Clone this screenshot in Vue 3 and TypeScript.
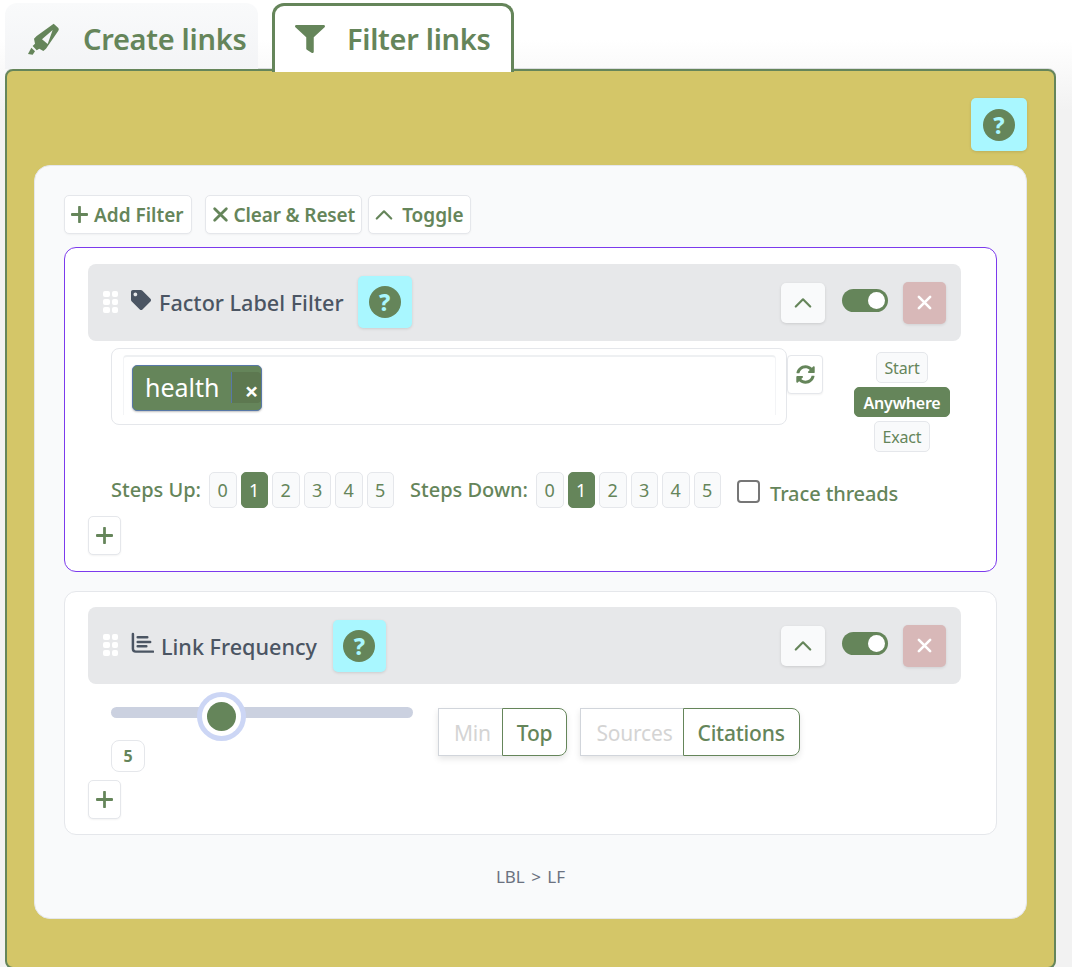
<template>
  <div class="page">
    <nav class="tabs">
      <button class="tab">
        <svg class="tab-icon marker" viewBox="20 20 105 105">
          <path fill-rule="evenodd" d="M103 25 117 38q3 4 0 8L80 100l-8 7-12-7-8 5-12-13 7-7-3-15 8-8ZM100 44 68 72l17 14Z" />
          <path d="M36 97 47 108l-7 10-14-2Z" />
        </svg>
        Create links
      </button>
      <button class="tab active">
        <svg class="tab-icon funnel" viewBox="0 0 512 512" preserveAspectRatio="none"><path :d="icons.filter" /></svg>
        Filter links
      </button>
    </nav>

    <section class="panel">
      <div class="panel-top">
        <button class="help big"><span class="help-dot">?</span></button>
      </div>

      <div class="builder">
        <div class="toolbar">
          <button class="tool add-filter">
            <svg class="sign" viewBox="0 0 16 16"><path d="M8 1v14M1 8h14" /></svg>
            Add Filter
          </button>
          <button class="tool clear">
            <svg class="sign" viewBox="0 0 16 16"><path d="M2.5 2.5l11 11M13.5 2.5l-11 11" /></svg>
            Clear &amp; Reset
          </button>
          <button class="tool toggle">
            <svg class="chev small" viewBox="0 0 20 12"><path d="M2 10.5 10 2.5l8 8" /></svg>
            Toggle
          </button>
        </div>

        <article class="filter selected">
          <header class="filter-head">
            <span class="grip"><i v-for="n in 6" :key="n"></i></span>
            <svg class="head-icon tag" viewBox="0 0 512 512"><path :d="icons.tag" /></svg>
            <h3>Factor Label Filter</h3>
            <button class="help"><span class="help-dot">?</span></button>
            <div class="head-actions">
              <button class="collapse">
                <svg class="chev" viewBox="0 0 20 12"><path d="M2 10.5 10 2.5l8 8" /></svg>
              </button>
              <span class="switch"><i></i></span>
              <button class="remove">
                <svg viewBox="0 0 16 16"><path d="M2 2l12 12M14 2 2 14" /></svg>
              </button>
            </div>
          </header>

          <div class="search-row">
            <div class="search">
              <div class="search-inner">
                <span class="chip">
                  <span class="chip-text">health</span>
                  <span class="chip-x">×</span>
                </span>
              </div>
            </div>
            <button class="refresh">
              <svg viewBox="0 0 512 512"><path :d="icons.sync" /></svg>
            </button>
            <div class="match">
              <button class="match-btn">Start</button>
              <button class="match-btn on">Anywhere</button>
              <button class="match-btn">Exact</button>
            </div>
          </div>

          <div class="steps">
            <span class="steps-label">Steps Up:</span>
            <div class="step-group">
              <button v-for="n in stepValues" :key="n" class="step" :class="{ on: n === 1 }">{{ n }}</button>
            </div>
            <span class="steps-label down">Steps Down:</span>
            <div class="step-group">
              <button v-for="n in stepValues" :key="n" class="step" :class="{ on: n === 1 }">{{ n }}</button>
            </div>
            <label class="trace"><span class="check"></span>Trace threads</label>
          </div>

          <button class="add">
            <svg class="sign" viewBox="0 0 16 16"><path d="M8 1v14M1 8h14" /></svg>
          </button>
        </article>

        <article class="filter second">
          <header class="filter-head">
            <span class="grip"><i v-for="n in 6" :key="n"></i></span>
            <svg class="head-icon chart" viewBox="0 0 24 22">
              <path d="M2 1.5V17a3 3 0 0 0 3 3h18" />
              <path d="M7 5h10M7 10h13M7 14.5h9" />
            </svg>
            <h3>Link Frequency</h3>
            <button class="help"><span class="help-dot">?</span></button>
            <div class="head-actions">
              <button class="collapse">
                <svg class="chev" viewBox="0 0 20 12"><path d="M2 10.5 10 2.5l8 8" /></svg>
              </button>
              <span class="switch"><i></i></span>
              <button class="remove">
                <svg viewBox="0 0 16 16"><path d="M2 2l12 12M14 2 2 14" /></svg>
              </button>
            </div>
          </header>

          <div class="freq-row">
            <div class="slider-wrap">
              <div class="slider">
                <span class="thumb"></span>
              </div>
              <span class="slider-value">5</span>
            </div>
            <div class="seg">
              <button class="seg-btn">Min</button>
              <button class="seg-btn on">Top</button>
            </div>
            <div class="seg">
              <button class="seg-btn">Sources</button>
              <button class="seg-btn on">Citations</button>
            </div>
          </div>

          <button class="add">
            <svg class="sign" viewBox="0 0 16 16"><path d="M8 1v14M1 8h14" /></svg>
          </button>
        </article>

        <p class="summary">LBL &gt; LF</p>
      </div>
    </section>
  </div>
</template>

<script setup lang="ts">
const stepValues = [0, 1, 2, 3, 4, 5]

// Font Awesome solid glyphs
const icons = {
  filter:
    'M487.976 0H24.028C2.71 0-8.047 25.866 7.058 40.971L192 225.941V432c0 7.831 3.821 15.17 10.237 19.662l80 55.98C298.02 518.69 320 507.493 320 487.98V225.941l184.947-184.97C520.021 25.896 509.338 0 487.976 0z',
  tag:
    'M0 252.118V48C0 21.49 21.49 0 48 0h204.118a48 48 0 0 1 33.941 14.059l211.882 211.882c18.745 18.745 18.745 49.137 0 67.882L293.823 497.941c-18.745 18.745-49.137 18.745-67.882 0L14.059 286.059A48 48 0 0 1 0 252.118zM112 64c-26.51 0-48 21.49-48 48s21.49 48 48 48 48-21.49 48-48-21.49-48-48-48z',
  sync:
    'M370.72 133.28C339.458 104.008 298.888 87.962 255.848 88c-77.458.068-144.328 53.178-162.791 126.85-1.344 5.363-6.122 9.15-11.651 9.15H24.103c-7.498 0-13.194-6.807-11.807-14.176C33.933 94.924 134.813 8 256 8c66.448 0 126.791 26.136 171.315 68.685L463.03 40.97C478.149 25.851 504 36.559 504 57.941V192c0 13.255-10.745 24-24 24H345.941c-21.382 0-32.09-25.851-16.971-40.971l41.75-41.749zM32 296h134.059c21.382 0 32.09 25.851 16.971 40.971l-41.75 41.75c31.262 29.273 71.835 45.319 114.876 45.28 77.418-.07 144.315-53.144 162.787-126.849 1.344-5.363 6.122-9.15 11.651-9.15h57.304c7.498 0 13.194 6.807 11.807 14.176C478.067 417.076 377.187 504 256 504c-66.448 0-126.791-26.136-171.315-68.685L48.97 471.03C33.851 486.149 8 475.441 8 454.059V320c0-13.255 10.745-24 24-24z',
}
</script>

<style scoped>
.page {
  height: 967px;
  overflow: hidden;
  box-sizing: border-box;
  padding: 3px 16px 0 5px;
  font-family: "Noto Sans", "Open Sans", sans-serif;
  color: #65855a;
  background: linear-gradient(#fff 40px, #f2f2f2 110px);
}

button {
  font-family: inherit;
  color: inherit;
  padding: 0;
  cursor: pointer;
}

.tabs {
  display: flex;
  gap: 14px;
  height: 69px;
  position: relative;
  z-index: 1;
}

.tab {
  width: 253px;
  height: 66px;
  box-sizing: border-box;
  display: flex;
  align-items: center;
  gap: 23px;
  padding: 5px 0 0 23px;
  border: 0;
  border-radius: 12px 12px 0 0;
  background: linear-gradient(#f9fafb, #f3f4f6);
  font-size: 29px;
  font-weight: 600;
  letter-spacing: -0.3px;
}

.tab.active {
  width: 242px;
  height: 69px;
  padding: 0 0 2px 20px;
  gap: 22px;
  border: 3px solid #65855a;
  border-bottom: 0;
  background: #fff;
}

.tab-icon {
  fill: #65855a;
  flex: none;
}

.tab-icon.marker {
  width: 35px;
  height: 35px;
  margin: 2px -1px 0 -2px;
}

.tab-icon.funnel {
  width: 30px;
  height: 28px;
  margin-top: 2px;
}

.panel {
  box-sizing: border-box;
  height: 900px;
  margin-top: -3px;
  border: 2px solid #65855a;
  border-radius: 8px;
  background: #d4c668;
  box-shadow: 0 -1px 0 #d9dcdf;
  padding: 27px 27px 0;
}

.panel-top {
  display: flex;
  justify-content: flex-end;
  height: 67px;
}

.help {
  width: 54px;
  height: 52px;
  border: 0;
  border-radius: 5px;
  background: #a9f7ff;
  box-shadow: 0 1px 3px rgba(0, 0, 0, 0.12);
  display: flex;
  align-items: center;
  justify-content: center;
}

.selected .help {
  margin-top: -1px;
}

.second .help {
  width: 53px;
}

.help.big {
  width: 56px;
  height: 53px;
}

.help-dot {
  width: 32px;
  height: 32px;
  border-radius: 50%;
  background: #65855a;
  color: #a9f7ff;
  font-size: 23px;
  font-weight: 800;
  line-height: 32px;
  text-align: center;
}

.builder {
  box-sizing: border-box;
  height: 754px;
  padding: 29px 29px 0;
  background: #f9fafb;
  border: 1px solid #e5e7eb;
  border-radius: 16px;
}

.toolbar {
  display: flex;
  height: 52px;
  align-items: flex-start;
}

.tool {
  height: 39px;
  box-sizing: border-box;
  padding: 0 6px;
  margin-right: 6px;
  background: #fff;
  border: 1px solid #e5e7eb;
  border-radius: 5px;
  font-size: 19px;
  font-weight: 600;
  display: flex;
  align-items: center;
  gap: 6px;
  white-space: nowrap;
  box-shadow: 0 1px 2px rgba(0, 0, 0, 0.04);
}

.tool.add-filter {
  margin-right: 13px;
  padding-right: 7px;
}

.tool.clear {
  gap: 5px;
  letter-spacing: -0.15px;
}

.tool.toggle {
  gap: 9px;
}

.sign {
  width: 17px;
  height: 17px;
  fill: none;
  stroke: #65855a;
  stroke-width: 2.6;
  stroke-linecap: round;
  flex: none;
}

.chev {
  width: 18px;
  height: 11px;
  fill: none;
  stroke: #65855a;
  stroke-width: 2.4;
  stroke-linecap: round;
  stroke-linejoin: round;
}

.filter {
  box-sizing: border-box;
  background: #fff;
  border: 1px solid #e5e7eb;
  border-radius: 12px;
  padding: 16px 35px 0 23px;
}

.filter.selected {
  height: 325px;
  border-color: #7c3aed;
}

.filter.second {
  height: 244px;
  margin-top: 19px;
  padding-top: 15px;
}

.filter-head {
  height: 77px;
  display: flex;
  align-items: center;
  padding: 0 15px;
  background: #e7e8ea;
  border-radius: 8px;
  color: #4b5563;
}

.grip {
  width: 15px;
  display: grid;
  grid-template-columns: 6.5px 6.5px;
  gap: 2px;
  margin: -2px 13px 0 0;
}

.grip i {
  height: 6px;
  border-radius: 2px;
  background: #fff;
}

.head-icon {
  flex: none;
  margin-top: -5px;
}

.head-icon.tag {
  width: 20px;
  height: 20px;
  fill: #4b5563;
  margin-right: 8px;
}

.head-icon.chart {
  width: 23px;
  height: 22px;
  fill: none;
  stroke: #4b5563;
  stroke-width: 2.6;
  stroke-linecap: round;
  margin-right: 7px;
}

h3 {
  margin: 0 14px 0 0;
  font-size: 21.6px;
  font-weight: 500;
  white-space: nowrap;
}

.second h3 {
  margin: 2px 16px 0 0;
}

.head-actions {
  margin-left: auto;
  display: flex;
  align-items: center;
}

.collapse {
  width: 44px;
  height: 40px;
  background: #f9fafb;
  border: 0;
  border-radius: 5px;
  box-shadow: 0 1px 3px rgba(0, 0, 0, 0.12);
  display: flex;
  align-items: center;
  justify-content: center;
}

.switch {
  width: 46px;
  height: 23px;
  margin: -4px 15px 0 17px;
  border-radius: 12px;
  background: #65855a;
  position: relative;
}

.switch i {
  position: absolute;
  right: 3px;
  top: 3px;
  width: 17px;
  height: 17px;
  border-radius: 50%;
  background: #fff;
}

.remove {
  width: 43px;
  height: 42px;
  background: #d8b8b8;
  border: 0;
  border-radius: 5px;
  box-shadow: 0 1px 3px rgba(0, 0, 0, 0.1);
  display: flex;
  align-items: center;
  justify-content: center;
}

.remove svg {
  width: 15px;
  height: 15px;
  fill: none;
  stroke: #fff;
  stroke-width: 2.8;
  stroke-linecap: round;
}

.search-row {
  display: flex;
  align-items: flex-start;
  margin: 7px 0 0 23px;
  height: 124px;
}

.search {
  width: 676px;
  height: 77px;
  box-sizing: border-box;
  flex: none;
  padding: 6px 10px 0 11px;
  border: 1px solid #e5e7eb;
  border-radius: 8px;
}

.search-inner {
  height: 60px;
  box-sizing: border-box;
  padding: 8px 8px 0;
  border-top: 2px solid #eef0f2;
  border-left: 1px solid #f3f4f6;
  border-right: 1px solid #f3f4f6;
  border-radius: 4px 4px 0 0;
}

.chip {
  width: 130px;
  height: 46px;
  box-sizing: border-box;
  display: flex;
  align-items: center;
  background: #65855a;
  border: 1px solid #5878a8;
  border-radius: 5px;
  box-shadow: 0 1px 2px rgba(0, 0, 0, 0.25);
  color: #fff;
}

.chip-text {
  flex: 1;
  padding-left: 12px;
  font-size: 25px;
  line-height: 1;
  margin-top: -2px;
}

.chip-x {
  width: 30px;
  height: 31px;
  box-sizing: border-box;
  padding-left: 10px;
  border-left: 1px solid #5878a8;
  background: #5d7850;
  font-size: 24px;
  font-weight: 700;
  line-height: 38px;
  text-align: center;
  border-radius: 0 4px 4px 0;
  margin-top: -2px;
}

.refresh {
  width: 36px;
  height: 39px;
  margin-top: 7px;
  background: #fff;
  border: 1px solid #e5e7eb;
  border-radius: 4px;
  box-shadow: 0 1px 2px rgba(0, 0, 0, 0.05);
  display: flex;
  align-items: center;
  justify-content: center;
}

.refresh svg {
  width: 19px;
  height: 19px;
  fill: #65855a;
}

.match {
  width: 96px;
  margin: 4px 0 0 31px;
  display: flex;
  flex-direction: column;
  align-items: center;
  gap: 4px;
}

.match-btn {
  height: 31px;
  box-sizing: border-box;
  padding: 1px 8px 0;
  background: #f9fafb;
  border: 1px solid #e5e7eb;
  border-radius: 5px;
  font-size: 16px;
  letter-spacing: -0.2px;
}

.match-btn.on {
  width: 96px;
  height: 30px;
  padding: 1px 0 0;
  background: #65855a;
  border-color: #65855a;
  color: #fff;
  font-weight: 600;
}

.steps {
  display: flex;
  align-items: center;
  margin-left: 23px;
  height: 36px;
  font-size: 20px;
  font-weight: 500;
}

.steps-label {
  white-space: nowrap;
  width: 98px;
  margin-top: -2px;
}

.steps-label.down {
  width: 126px;
  margin-left: 16px;
}

.step-group {
  display: flex;
  gap: 4px;
}

.step {
  width: 27.5px;
  height: 36px;
  box-sizing: border-box;
  background: #f9fafb;
  border: 1px solid #e5e7eb;
  border-radius: 5px;
  font-size: 18px;
  font-weight: 400;
}

.step.on {
  background: #65855a;
  border-color: #65855a;
  color: #fff;
}

.trace {
  display: flex;
  align-items: center;
  margin: 6px 0 0 16px;
  font-size: 20px;
  white-space: nowrap;
  letter-spacing: -0.1px;
}

.check {
  width: 19px;
  height: 19px;
  border: 2px solid #767676;
  border-radius: 4px;
  margin: -4px 10px 0 0;
}

.add {
  display: flex;
  align-items: center;
  justify-content: center;
  width: 33px;
  height: 39px;
  margin-top: 8px;
  background: #fff;
  border: 1px solid #e5e7eb;
  border-radius: 5px;
  box-shadow: 0 1px 2px rgba(0, 0, 0, 0.05);
}

.freq-row {
  display: flex;
  align-items: flex-start;
  margin: 23px 0 0 23px;
  height: 65px;
}

.slider-wrap {
  width: 302px;
  flex: none;
  margin-right: 25px;
}

.slider {
  height: 11px;
  border-radius: 6px;
  background: #cbd1e0;
  position: relative;
}

.thumb {
  position: absolute;
  left: 96px;
  top: -5px;
  width: 29px;
  height: 29px;
  border-radius: 50%;
  background: #65855a;
  box-shadow: 0 0 0 5px #fff, 0 0 0 10px #ccd6f5;
}

.slider-value {
  display: flex;
  align-items: center;
  justify-content: center;
  width: 34px;
  height: 32px;
  box-sizing: border-box;
  margin-top: 22px;
  background: #fff;
  border: 1px solid #e5e7eb;
  border-radius: 8px;
  font-size: 16px;
  font-weight: 700;
}

.seg {
  display: flex;
  height: 48px;
  margin: 1px 13px 0 0;
  border-radius: 0 8px 8px 0;
  box-shadow: 0 3px 6px rgba(0, 0, 0, 0.1);
}

.seg-btn {
  box-sizing: border-box;
  height: 48px;
  padding: 2px 11px 0 15px;
  background: #fff;
  border: 1px solid #d1d5db;
  border-right: 0;
  font-size: 21px;
  letter-spacing: -0.2px;
  color: #d4d4d4;
}

.seg-btn.on {
  padding: 2px 14px 0;
  border: 1px solid #65855a;
  border-radius: 0 8px 8px 0;
  color: #65855a;
  font-weight: 500;
}

.seg + .seg .seg-btn {
  padding-right: 10px;
}

.seg + .seg .seg-btn.on {
  padding: 2px 14px 0;
}

.summary {
  margin: 32px 0 0;
  font-size: 17px;
  word-spacing: 2px;
  line-height: 20px;
  text-align: center;
  color: #6b7280;
}
</style>

<style>
html,
body {
  margin: 0;
  background: #fff;
}
</style>
